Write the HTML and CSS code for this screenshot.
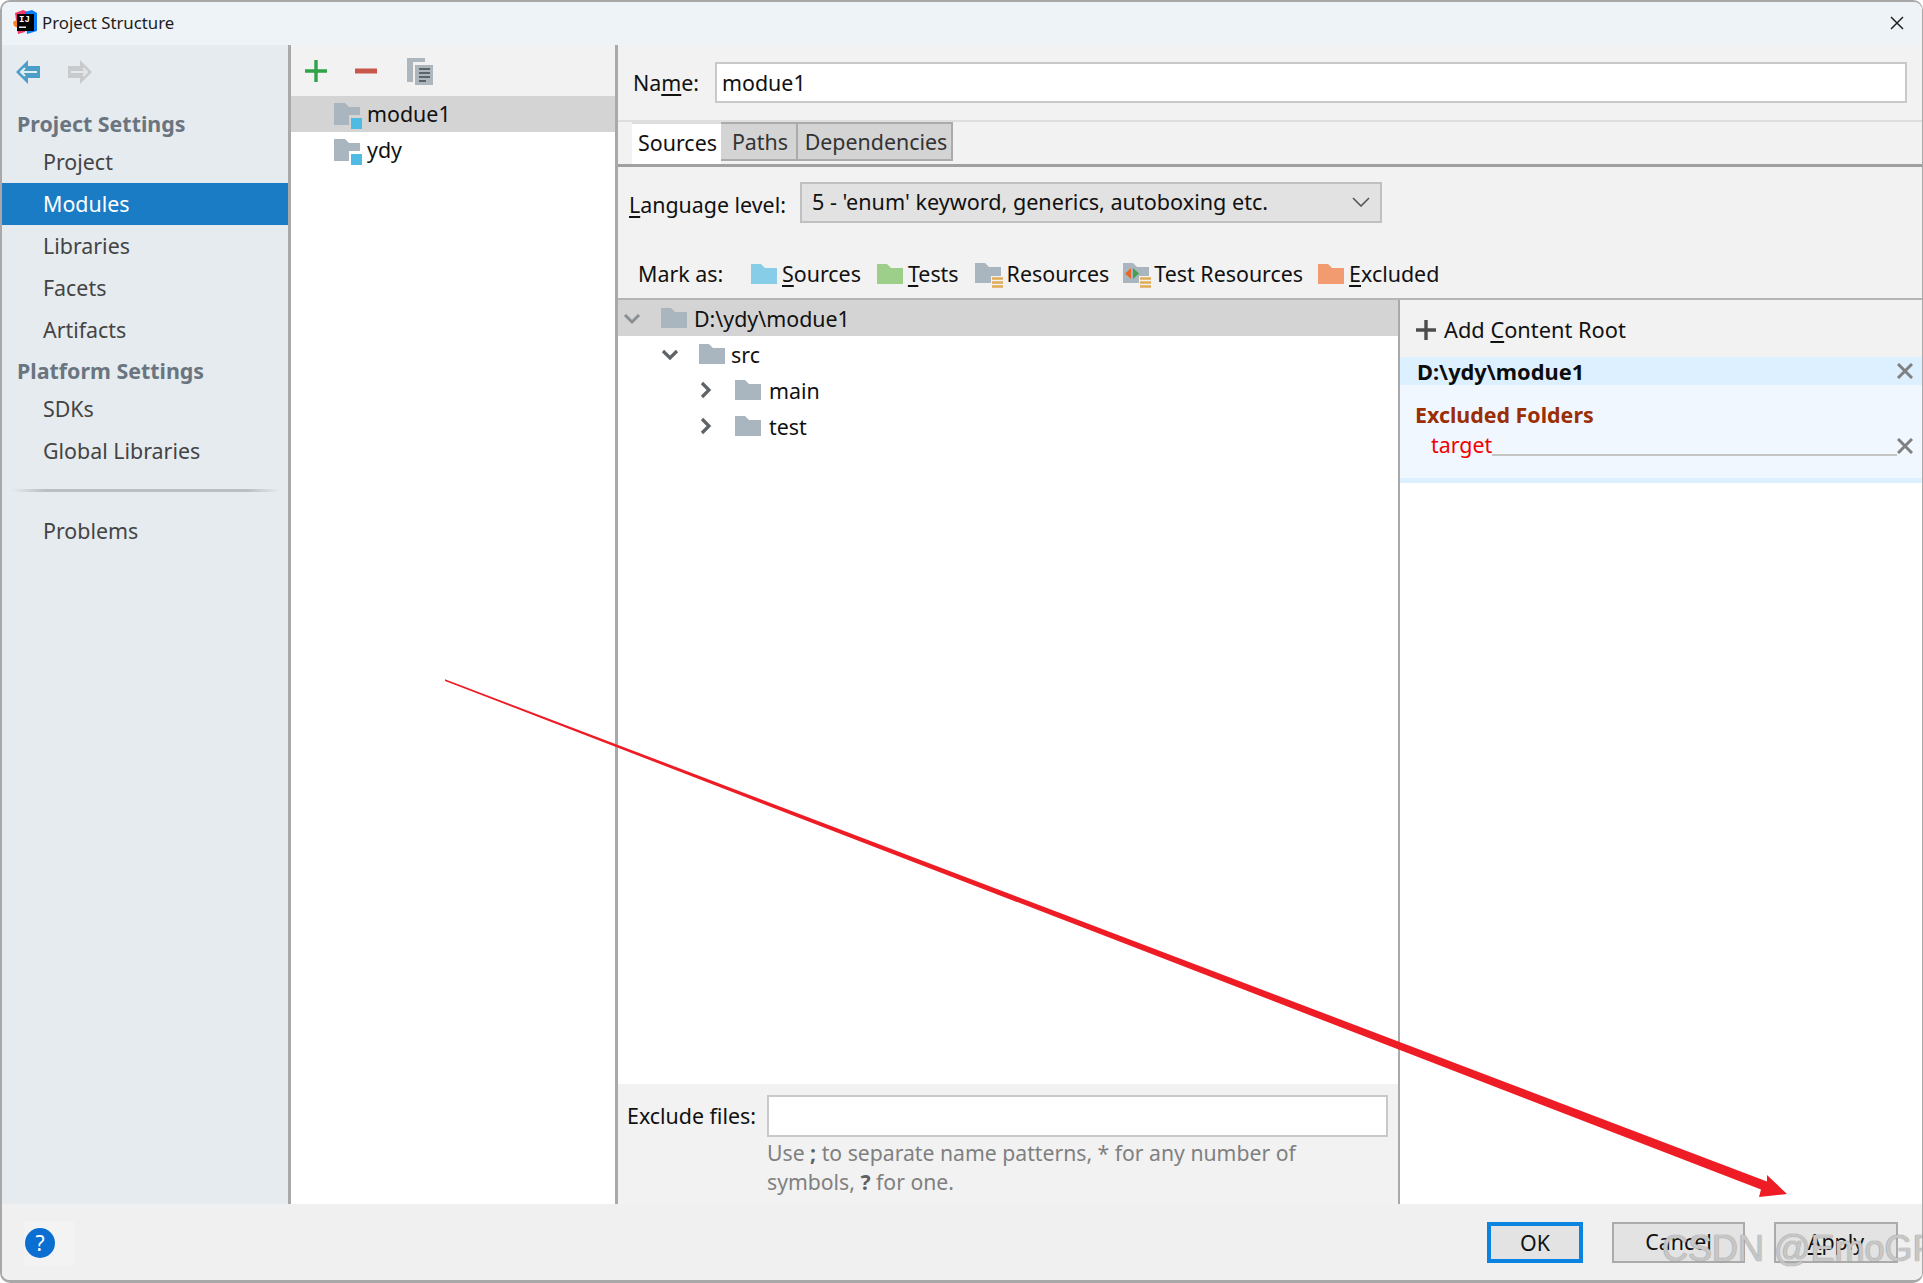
FILE: index.html
```html
<!DOCTYPE html>
<html lang="en">
<head>
<meta charset="utf-8">
<title>Project Structure</title>
<link rel="stylesheet" href="styles.css">
</head>
<body>
<div class="dialog">
  <header class="titlebar">
    <svg class="logo" width="25" height="25" viewBox="0 0 25 25">
      <path d="M2 3 L10 0 L15 2 L12 22 L5 24Z" fill="#f0386b"/>
      <path d="M12 2 L19 0 L24 3 L24 21 L14 24Z" fill="#087cfa"/>
      <path d="M0 12 L5 9 L5 18 L1 16Z" fill="#fc801d"/>
      <rect x="4" y="4" width="17" height="17" fill="#000"/>
      <text x="6" y="12" class="logo-text">IJ</text>
      <rect x="6" y="16.5" width="7" height="1.4" fill="#fff"/>
    </svg>
    <span class="title-text">Project Structure</span>
    <svg class="close" width="16" height="16" viewBox="0 0 16 16"><path d="M2 2 L14 14 M14 2 L2 14" stroke="#222" stroke-width="1.5" fill="none"/></svg>
  </header>
  <div class="main">
    <nav class="side">
      <div class="nav-tools">
        <svg width="26" height="26" viewBox="0 0 26 26"><path d="M13 1 L1 13 L13 25 V19 H25 V7 H13Z" fill="#4d9dc9"/><path d="M10 9 L6 13 L10 17 M6 13 H22" stroke="#e2eef5" stroke-width="2" fill="none"/></svg>
        <svg width="26" height="26" viewBox="0 0 26 26"><path d="M13 1 L25 13 L13 25 V19 H1 V7 H13Z" fill="#c8cacc"/><path d="M16 9 L20 13 L16 17 M4 13 H20" stroke="#e4e7ea" stroke-width="2" fill="none"/></svg>
      </div>
      <div class="nav-head nav-head-first">Project Settings</div>
      <div class="nav-item">Project</div>
      <div class="nav-item nav-active">Modules</div>
      <div class="nav-item">Libraries</div>
      <div class="nav-item">Facets</div>
      <div class="nav-item">Artifacts</div>
      <div class="nav-head">Platform Settings</div>
      <div class="nav-item">SDKs</div>
      <div class="nav-item">Global Libraries</div>
      <div class="nav-divider"></div>
      <div class="nav-item">Problems</div>
    </nav>
    <section class="mods">
      <div class="mods-tools">
        <svg class="t-plus" width="24" height="24" viewBox="0 0 24 24"><path d="M12 1 V23 M1 12 H23" stroke="#2fa24a" stroke-width="3.4" fill="none"/></svg>
        <svg class="t-minus" width="24" height="24" viewBox="0 0 24 24"><path d="M1 12 H23" stroke="#c8584c" stroke-width="5" fill="none"/></svg>
        <svg class="t-copy" width="28" height="29" viewBox="0 0 28 29">
          <path d="M1 1 H19 V5 H7 V25 H1Z" fill="#aeb6bd"/>
          <rect x="9" y="8" width="18" height="20" fill="#aeb6bd"/>
          <path d="M13 12 H24 M13 16 H24 M13 20 H24 M13 24 H20" stroke="#5b6469" stroke-width="1.8"/>
        </svg>
      </div>
      <div class="mod-row mod-selected">
        <svg class="modicon" width="29" height="27" viewBox="0 0 29 27"><path d="M0 0 H11 L15 4 H26 V22 H0Z" fill="#aab6bf"/><rect x="15" y="12" width="14" height="14" fill="#d4d4d4"/><rect x="17" y="15" width="11" height="11" fill="#4ebbe4"/></svg>
        <span>modue1</span>
      </div>
      <div class="mod-row">
        <svg class="modicon" width="29" height="27" viewBox="0 0 29 27"><path d="M0 0 H11 L15 4 H26 V22 H0Z" fill="#aab6bf"/><rect x="15" y="12" width="14" height="14" fill="#fff"/><rect x="17" y="15" width="11" height="11" fill="#4ebbe4"/></svg>
        <span class="ydy">ydy</span>
      </div>
    </section>
    <section class="detail">
      <div class="name-row">
        <span class="name-label">Na<u>m</u>e:</span>
        <div class="field name-field">modue1</div>
      </div>
      <div class="tabs">
        <div class="tab tab-on">Sources</div>
        <div class="tab tab-paths">Paths</div>
        <div class="tab tab-deps">Dependencies</div>
      </div>
      <div class="lang-row">
        <span class="lang-label"><u>L</u>anguage level:</span>
        <div class="combo">
          <span>5 - 'enum' keyword, generics, autoboxing etc.</span>
          <svg width="18" height="10" viewBox="0 0 18 10"><path d="M1 1 L9 9 L17 1" stroke="#555" stroke-width="1.6" fill="none"/></svg>
        </div>
      </div>
      <div class="mark-row">
        <span class="mark-label">Mark as:</span>
        <span class="mark mark-src">
          <svg width="26" height="20" viewBox="0 0 26 20"><path d="M0 0 H10 L14 4 H26 V20 H0Z" fill="#87cde8"/></svg>
          <span><u>S</u>ources</span>
        </span>
        <span class="mark mark-tst">
          <svg width="26" height="20" viewBox="0 0 26 20"><path d="M0 0 H10 L14 4 H26 V20 H0Z" fill="#9dcf8a"/></svg>
          <span><u>T</u>ests</span>
        </span>
        <span class="mark mark-res">
          <svg width="28" height="27" viewBox="0 0 28 27"><path d="M0 0 H10 L14 4 H26 V20 H0Z" fill="#aab6bf"/><rect x="16" y="13" width="12" height="14" fill="#f2f2f2"/><path d="M17 15.5 H28 M17 19.5 H28 M17 23.5 H28" stroke="#e0ac55" stroke-width="2.6"/></svg>
          <span>Resources</span>
        </span>
        <span class="mark mark-tres">
          <svg width="28" height="27" viewBox="0 0 28 27"><path d="M0 0 H10 L14 4 H26 V20 H0Z" fill="#aab6bf"/><path d="M8 5 L2 10.5 L8 16Z" fill="#e8682a"/><path d="M10 5 L16 10.5 L10 16Z" fill="#3fa34d"/><rect x="16" y="13" width="12" height="14" fill="#f2f2f2"/><path d="M17 15.5 H28 M17 19.5 H28 M17 23.5 H28" stroke="#e0ac55" stroke-width="2.6"/></svg>
          <span>Test Resources</span>
        </span>
        <span class="mark mark-exc">
          <svg width="26" height="20" viewBox="0 0 26 20"><path d="M0 0 H10 L14 4 H26 V20 H0Z" fill="#f29b71"/></svg>
          <span><u>E</u>xcluded</span>
        </span>
      </div>
      <div class="content">
        <div class="tree-col">
          <div class="tree">
            <div class="tree-row tree-sel">
              <svg class="chev" width="18" height="18" viewBox="0 0 18 18"><path d="M2 6 L9 13 L16 6" stroke="#8a8f93" stroke-width="3" fill="none"/></svg>
              <svg class="folder" width="26" height="20" viewBox="0 0 26 20"><path d="M0 0 H10 L14 4 H26 V20 H0Z" fill="#aab6bf"/></svg>
              <span>D:\ydy\modue1</span>
            </div>
            <div class="tree-row lvl1">
              <svg class="chev" width="18" height="18" viewBox="0 0 18 18"><path d="M2 6 L9 13 L16 6" stroke="#5f6366" stroke-width="3.2" fill="none"/></svg>
              <svg class="folder" width="26" height="20" viewBox="0 0 26 20"><path d="M0 0 H10 L14 4 H26 V20 H0Z" fill="#aab6bf"/></svg>
              <span>src</span>
            </div>
            <div class="tree-row lvl2">
              <svg class="chev" width="18" height="18" viewBox="0 0 18 18"><path d="M5 2 L12 9 L5 16" stroke="#5f6366" stroke-width="3.2" fill="none"/></svg>
              <svg class="folder" width="26" height="20" viewBox="0 0 26 20"><path d="M0 0 H10 L14 4 H26 V20 H0Z" fill="#aab6bf"/></svg>
              <span>main</span>
            </div>
            <div class="tree-row lvl2">
              <svg class="chev" width="18" height="18" viewBox="0 0 18 18"><path d="M5 2 L12 9 L5 16" stroke="#5f6366" stroke-width="3.2" fill="none"/></svg>
              <svg class="folder" width="26" height="20" viewBox="0 0 26 20"><path d="M0 0 H10 L14 4 H26 V20 H0Z" fill="#aab6bf"/></svg>
              <span>test</span>
            </div>
          </div>
          <div class="exclude">
            <span class="exclude-label">Exclude files:</span>
            <div class="exclude-body">
              <div class="field exclude-field"></div>
              <p class="hint">Use <b>;</b> to separate name patterns, * for any number of symbols, <b>?</b> for one.</p>
            </div>
          </div>
        </div>
        <aside class="roots">
          <div class="roots-tools">
            <svg width="20" height="20" viewBox="0 0 20 20"><path d="M10 0 V20 M0 10 H20" stroke="#4d4d4d" stroke-width="3.4" fill="none"/></svg>
            <span>Add <u>C</u>ontent Root</span>
          </div>
          <div class="root-head">
            <span>D:\ydy\modue1</span>
            <svg width="16" height="16" viewBox="0 0 16 16"><path d="M1 1 L15 15 M15 1 L1 15" stroke="#808080" stroke-width="3" fill="none"/></svg>
          </div>
          <div class="root-body">
            <div class="excl-title">Excluded Folders</div>
            <div class="excl-row">
              <span class="excl-name">target</span>
              <span class="excl-line"></span>
              <svg class="excl-x" width="16" height="16" viewBox="0 0 16 16"><path d="M1 1 L15 15 M15 1 L1 15" stroke="#808080" stroke-width="3" fill="none"/></svg>
            </div>
          </div>
        </aside>
      </div>
    </section>
  </div>
  <footer class="footer">
    <div class="help-box"><div class="help">?</div></div>
    <div class="buttons">
      <div class="btn btn-ok">OK</div>
      <div class="btn btn-cancel">Cancel</div>
      <div class="btn btn-apply"><u>A</u>pply</div>
    </div>
  </footer>
  <svg class="annot" width="1923" height="1283" viewBox="0 0 1923 1283">
    <path d="M445 679.2 L1767 1181.6 L1767 1175 L1787 1194 L1759 1197 L1761 1189.6 L445 680.9 Z" fill="#ee1c25"/>
  </svg>
  <div class="watermark">CSDN @EmoGP</div>
</div>
</body>
</html>
```
FILE: styles.css
```css
* { box-sizing: border-box; }
html, body { margin: 0; padding: 0; background: #fff; }
body { font-family: "Noto Sans", "Open Sans", sans-serif; font-size: 21.4px; color: #111; }
u { text-underline-offset: 3px; text-decoration-thickness: 2px; }

.dialog {
  position: relative;
  width: 1923px;
  height: 1283px;
  display: flex;
  flex-direction: column;
  overflow: hidden;
  border: solid #a8a8a8;
  border-width: 2px 1px 3px 2px;
  border-radius: 10px;
  background: #f0f0f0;
}

.titlebar {
  height: 43px;
  flex: none;
  display: flex;
  align-items: center;
  padding: 0 17px 2px 11px;
  background: #eef3f8;
  font-size: 16.8px;
  color: #1c1c1c;
}
.logo { flex: none; }
.logo-text { font: bold 9px "Liberation Mono", monospace; fill: #fff; }
.title-text { margin-left: 4px; }
.close { margin-left: auto; }

.main { flex: 1; min-height: 0; display: flex; }

.side {
  width: 289px;
  flex: none;
  background: #e6ebf0;
  border-right: 3px solid #a9a9a9;
  color: #444;
}
.nav-tools { height: 56px; display: flex; align-items: center; gap: 26px; padding: 0 0 2px 13px; }
.nav-head { height: 37px; line-height: 40px; padding-left: 15px; font-weight: 700; color: #6a7580; }
.nav-head-first { margin-top: 3px; }
.nav-item { height: 42px; line-height: 42px; padding-left: 41px; }
.nav-active { background: #1a7cc4; color: #fff; }
.nav-divider {
  height: 3px;
  margin: 17px 8px 18px 10px;
  background: linear-gradient(to right, #e6ebf0, #bcbfc2 12%, #bcbfc2 88%, #e6ebf0);
}

.mods {
  width: 327px;
  flex: none;
  background: #fff;
  border-right: 3px solid #a9a9a9;
}
.mods-tools { height: 51px; background: #f2f2f2; display: flex; align-items: center; padding: 0 0 0 13px; }
.t-minus { margin-left: 26px; }
.t-copy { margin-left: 28px; margin-top: 1px; }
.mod-row { height: 36px; display: flex; align-items: center; padding-left: 43px; }
.mod-selected { background: #d4d4d4; }
.modicon { flex: none; margin-top: 4px; }
.mod-row span { margin-left: 4px; margin-bottom: 1px; }

.detail { flex: 1; min-width: 0; display: flex; flex-direction: column; background: #f2f2f2; }

.name-row { height: 77px; flex: none; display: flex; align-items: center; padding: 0 15px 0 15px; border-bottom: 2px solid #dedede; }
.name-label { width: 82px; flex: none; }
.field { background: #fff; border: 2px solid #c9c9c9; }
.name-field { flex: 1; height: 41px; line-height: 37px; padding-left: 5px; }

.tabs { height: 45px; flex: none; display: flex; padding: 0 0 0 14px; border-bottom: 3px solid #a0a0a0; }
.tab { height: 39px; line-height: 36px; padding-left: 3px; text-align: center; background: #d4d4d4; border: 2px solid #ababab; border-left-width: 0; color: #333; }
.tab-on { width: 89px; padding-left: 2px; background: #fff; border: 0; height: 42px; line-height: 37px; color: #111; border-top: 2px solid #dedede; }
.tab-paths { width: 77px; }
.tab-deps { width: 155px; }

.lang-row { height: 57px; flex: none; margin-top: 15px; display: flex; align-items: flex-start; padding-left: 11px; }
.lang-label { width: 171px; flex: none; line-height: 46px; }
.combo { width: 582px; height: 41px; display: flex; align-items: center; justify-content: space-between; padding: 0 10px 2px 10px; font-size: 21.6px; background: #e2e2e2; border: 2px solid #c0c0c0; }

.mark-row { height: 61px; flex: none; display: flex; align-items: center; padding: 10px 0 0 20px; border-bottom: 2px solid #b5b5b5; }
.mark-label { width: 113px; flex: none; }
.mark { display: flex; align-items: center; }
.mark svg { flex: none; margin-right: 5px; }
.mark-tst { margin-left: 16px; }
.mark-res { margin-left: 16px; }
.mark-res svg { margin-right: 4px; margin-top: 5px; }
.mark-tres svg { margin-right: 3px; margin-top: 5px; }
.mark-tres { margin-left: 14px; }
.mark-exc { margin-left: 15px; }

.content { flex: 1; min-height: 0; display: flex; }
.tree-col { width: 782px; flex: none; display: flex; flex-direction: column; background: #fff; border-right: 2px solid #a9a9a9; }
.tree { flex: 1; }
.tree-row { height: 36px; display: flex; align-items: center; color: #111; }
.tree-sel { background: #d4d4d4; padding-left: 5px; }
.lvl1 { padding-left: 43px; }
.lvl2 { padding-left: 79px; }
.chev { flex: none; }
.folder { flex: none; margin-left: 20px; margin-right: 7px; }
.lvl1 .folder { margin-right: 6px; }
.lvl2 .folder { margin-right: 8px; }

.exclude { height: 120px; flex: none; background: #f2f2f2; display: flex; padding: 11px 10px 0 9px; }
.exclude-label { width: 140px; flex: none; line-height: 42px; }
.exclude-body { flex: 1; }
.exclude-field { height: 42px; }
.hint { margin: 1px 0 0; width: 560px; font-size: 21.2px; line-height: 29px; color: #808080; }
.hint b { color: #606060; }

.roots { flex: 1; background: #fff; font-size: 21.8px; }
.roots-tools { height: 57px; background: #f2f2f2; display: flex; align-items: center; gap: 8px; padding: 2px 0 0 16px; }
.root-head { height: 28px; background: #dcf0ff; display: flex; align-items: center; justify-content: space-between; padding: 0 9px 0 17px; font-weight: 700; color: #0c0c0c; }
.root-body { height: 98px; background: #f0f7ff; border-bottom: 5px solid #dcf0ff; padding: 14px 9px 0 15px; font-size: 21.4px; }
.excl-title { line-height: 32px; font-weight: 700; color: #9a2f05; }
.excl-row { display: flex; align-items: center; height: 30px; padding-left: 16px; margin-top: 2px; }
.excl-name { color: #f00000; margin-bottom: 7px; }
.excl-line { flex: 1; height: 2px; background: #c4c4c4; margin-top: 13px; }
.excl-x { flex: none; margin-bottom: 5px; }

.footer { height: 76px; flex: none; display: flex; align-items: center; justify-content: space-between; padding: 0 24px 0 22px; background: #f0f0f0; }
.help-box { width: 50px; height: 45px; display: flex; align-items: center; padding-left: 1px; background: #f3f3f3; margin-top: 2px; }
.help { width: 30px; height: 30px; border-radius: 50%; background: #0a6fd0; color: #fff; text-align: center; line-height: 30px; font-size: 21px; }
.buttons { display: flex; gap: 29px; }
.btn { height: 41px; line-height: 35px; text-align: center; background: #e3e3e3; border: 2px solid #ababab; color: #111; }
.btn-ok { width: 96px; border: 4px solid #0a84e0; line-height: 33px; }
.btn-cancel { width: 133px; }
.btn-apply { width: 124px; }

.annot { position: absolute; left: -2px; top: -2px; pointer-events: none; }
.watermark {
  position: absolute;
  left: 1660px;
  top: 1226px;
  font: 36px "Liberation Sans", sans-serif;
  white-space: nowrap;
  color: rgba(255,255,255,.5);
  text-shadow: 0 0 1px #909090, 0 0 1px #909090;
}
```
